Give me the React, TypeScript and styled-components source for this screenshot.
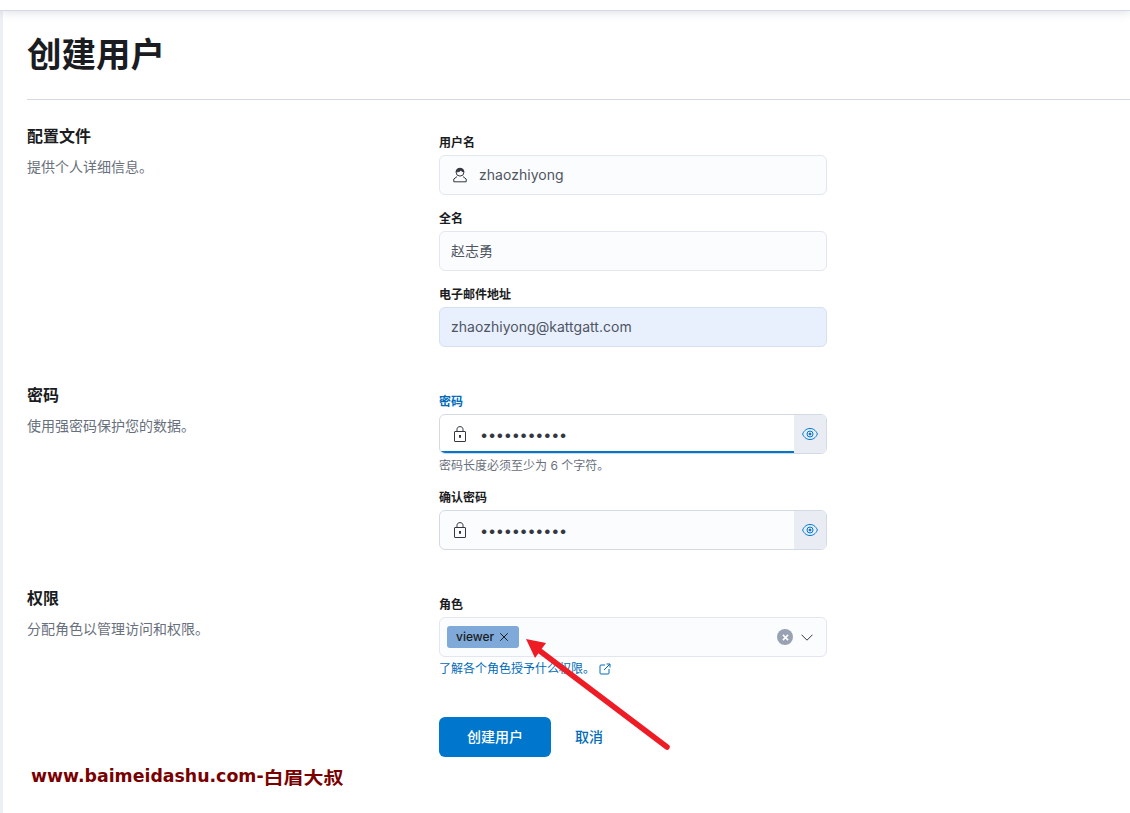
import React from 'react';
import styled, { createGlobalStyle } from 'styled-components';

const cjk = `Inter, "Noto Sans CJK SC", sans-serif`;

const Global = createGlobalStyle`
  html, body { margin: 0; padding: 0; background: #fff; }
  body { font-family: ${cjk}; color: #1a1c21; overflow: hidden; }
  * { box-sizing: border-box; }
`;

const Page = styled.div`
  position: relative;
  width: 1130px;
  height: 813px;
  overflow: hidden;
  background: #fff;
`;
const TopBar = styled.header`
  height: 11px;
  background: #fff;
  border-bottom: 1px solid #d3dae6;
  box-shadow: 0 2px 8px rgba(152, 162, 179, 0.3);
  position: relative;
  z-index: 1;
`;
const Shell = styled.div`
  display: flex;
  height: 802px;
`;
const SideStrip = styled.aside`
  width: 3px;
  background: #eceff4;
  flex: none;
`;
const Main = styled.main`
  flex: 1;
  padding-left: 24px;
`;
const Title = styled.h1`
  margin: 0;
  height: 89px;
  padding-top: 23px;
  font-size: 34.5px;
  line-height: 42px;
  font-weight: 700;
  color: #1a1c21;
  border-bottom: 1px solid #d3dae6;
`;
const Sections = styled.div`
  display: flex;
  flex-direction: column;
  gap: 36px;
  padding-top: 24px;
`;
const Section = styled.section`
  display: grid;
  grid-template-columns: 412px 388px;
`;
const SectionHeading = styled.h2`
  margin: 0;
  font-size: 16px;
  line-height: 24px;
  font-weight: 600;
  color: #1a1c21;
`;
const SectionDesc = styled.p`
  margin: 9px 0 0;
  font-size: 14px;
  line-height: 20px;
  color: #69707d;
`;
const Fields = styled.div`
  display: flex;
  flex-direction: column;
  gap: 16px;
  padding-top: 11px;
`;
const Field = styled.div`
  display: flex;
  flex-direction: column;
`;
const Label = styled.label<{ $active?: boolean }>`
  font-size: 12px;
  line-height: 16px;
  font-weight: 600;
  margin-bottom: 4px;
  color: ${p => (p.$active ? '#006bb8' : '#1a1c21')};
`;
const InputBox = styled.div<{ $variant?: 'auto' | 'focus' }>`
  display: flex;
  align-items: center;
  height: 40px;
  border: 1px solid #e2e6f0;
  border-radius: 6px;
  overflow: hidden;
  background: ${p => (p.$variant === 'auto' ? '#e8f0fe' : p.$variant === 'focus' ? '#fff' : '#fbfcfd')};
  border-color: ${p => (p.$variant === 'auto' ? '#d5e0f3' : '#e2e6f0')};
`;
const StrongBox = styled(InputBox)`
  border-color: #d3dae6;
`;
const IconSlot = styled.span<{ $w?: number }>`
  width: ${p => p.$w ?? 40}px;
  flex: none;
  display: flex;
  align-items: center;
  justify-content: center;
  color: #343741;
`;
const Text = styled.input`
  flex: 1;
  min-width: 0;
  height: 100%;
  border: none;
  outline: none;
  background: transparent;
  padding: 0 0 2px;
  font: 400 14px ${cjk};
  letter-spacing: 0.03px;
  color: #4f5562;
`;
const PlainText = styled(Text)`
  padding-left: 11px;
`;
const PasswordWrap = styled.div<{ $focus?: boolean }>`
  flex: 1;
  align-self: stretch;
  display: flex;
  align-items: center;
  box-shadow: ${p => (p.$focus ? 'inset 0 -2px 0 #0077cc' : 'none')};
`;
const Dots = styled(Text)`
  padding-bottom: 0;
  color: #343741;
  font-size: 14.5px;
  letter-spacing: -0.25px;
`;
const EyeAppend = styled.button`
  width: 32px;
  flex: none;
  align-self: stretch;
  border: none;
  padding: 0;
  background: #e9edf3;
  color: #0077cc;
  display: flex;
  align-items: center;
  justify-content: center;
`;
const Help = styled.div`
  margin-top: 4px;
  font-size: 12px;
  line-height: 16px;
  color: #69707d;
`;
const HelpLink = styled.a`
  margin-top: 4px;
  display: flex;
  align-items: center;
  gap: 4px;
  font-size: 12px;
  line-height: 16px;
  color: #006bb8;
`;
const Tag = styled.span`
  margin-left: 7px;
  width: 72px;
  height: 22px;
  border-radius: 3px;
  background: #7ea9d9;
  color: #1a1c21;
  display: flex;
  align-items: center;
  padding: 0 0 1px 9px;
  gap: 5px;
  font-size: 12px;
  font-weight: 500;
`;
const ComboEnd = styled.div`
  margin-left: auto;
  display: flex;
  align-items: center;
  gap: 8px;
  padding-right: 13px;
  color: #343741;
`;
const ClearDot = styled.span`
  width: 16px;
  height: 16px;
  border-radius: 50%;
  background: #98a2b3;
  color: #fff;
  display: flex;
  align-items: center;
  justify-content: center;
`;
const Actions = styled.div`
  display: flex;
  align-items: center;
  gap: 24px;
  margin-top: 40px;
`;
const Primary = styled.button`
  width: 112px;
  height: 40px;
  border: none;
  border-radius: 6px;
  background: #0077cc;
  color: #fff;
  padding: 0 0 2px;
  font: 500 14px ${cjk};
`;
const Cancel = styled.a`
  color: #006bb8;
  font-size: 14px;
  font-weight: 500;
  margin-bottom: 2px;
`;
const Watermark = styled.div`
  position: absolute;
  left: 31px;
  top: 763px;
  display: flex;
  align-items: center;
  height: 26px;
  color: #7a0000;
  font-family: "DejaVu Sans", sans-serif;
  font-weight: 700;
  font-size: 17.35px;
  white-space: nowrap;
`;
const WatermarkCn = styled.span`
  font-family: "Noto Sans CJK SC", sans-serif;
  font-size: 20px;
  display: inline-block;
  transform: scaleY(0.85);
`;
const ArrowLayer = styled.svg`
  position: absolute;
  left: 0;
  top: 0;
  pointer-events: none;
`;

const UserIcon = () => (
  <svg width="16" height="16" viewBox="0 0 16 16" fill="none" stroke="currentColor" strokeWidth="1">
    <circle cx="8" cy="5.2" r="3.9" />
    <path d="M4.1 4.8C6 5 8 4.4 8.8 3 9.4 4.1 10.4 4.7 11.9 4.8 11.7 2.6 9.9 1.3 8 1.3 6.1 1.3 4.3 2.6 4.1 4.8Z" fill="currentColor" />
    <path d="M5 9.6 1.8 12V14.8H14.2V12L11 9.6" />
  </svg>
);
const LockIcon = () => (
  <svg width="16" height="16" viewBox="0 0 16 16" fill="none" stroke="currentColor" strokeWidth="1">
    <rect x="2.5" y="5.5" width="11" height="10" rx="0.5" />
    <path d="M5 5.5V3.2C5 1.6 6.3 0.6 8 0.6 9.7 0.6 11 1.6 11 3.2V5.5" />
    <path d="M8 9V11.8" strokeWidth="2" />
  </svg>
);
const EyeIcon = () => (
  <svg width="16" height="16" viewBox="0 0 16 16" fill="none" stroke="currentColor" strokeWidth="1">
    <path d="M0.6 8C2.4 4 5 2.5 8 2.5 11 2.5 13.6 4 15.4 8 13.6 12 11 13.5 8 13.5 5 13.5 2.4 12 0.6 8Z" />
    <circle cx="8" cy="8" r="3" />
    <circle cx="8" cy="8" r="1" fill="currentColor" />
  </svg>
);
const CrossIcon = ({ size, weight = 1 }: { size: number; weight?: number }) => (
  <svg width={size} height={size} viewBox="0 0 16 16" fill="none" stroke="currentColor" strokeWidth={(16 / size) * weight}>
    <path d="M2 2 14 14M14 2 2 14" />
  </svg>
);
const ChevronIcon = () => (
  <svg width="12" height="7" viewBox="0 0 12 7" fill="none" stroke="currentColor" strokeWidth="1">
    <path d="M0.5 0.7 6 6.2 11.5 0.7" />
  </svg>
);
const ExternalIcon = () => (
  <svg width="12" height="12" viewBox="0 0 12 12" fill="none" stroke="currentColor" strokeWidth="1">
    <path d="M6 2H2Q1 2 1 3V10Q1 11 2 11H9Q10 11 10 10V6" />
    <path d="M5 7 11 1M7.5 1H11V4.5" />
  </svg>
);

const PasswordField = ({ focus }: { focus?: boolean }) => (
  <StrongBox $variant={focus ? 'focus' : undefined}>
    <PasswordWrap $focus={focus}>
      <IconSlot><LockIcon /></IconSlot>
      <Dots type="password" readOnly value="aaaaaaaaaaa" />
    </PasswordWrap>
    <EyeAppend type="button" aria-label="显示密码"><EyeIcon /></EyeAppend>
  </StrongBox>
);

export default function App() {
  return (
    <Page>
      <Global />
      <TopBar />
      <Shell>
        <SideStrip />
        <Main>
          <Title>创建用户</Title>
          <Sections>
            <Section>
              <div>
                <SectionHeading>配置文件</SectionHeading>
                <SectionDesc>提供个人详细信息。</SectionDesc>
              </div>
              <Fields>
                <Field>
                  <Label>用户名</Label>
                  <InputBox>
                    <IconSlot $w={39}><UserIcon /></IconSlot>
                    <Text readOnly value="zhaozhiyong" />
                  </InputBox>
                </Field>
                <Field>
                  <Label>全名</Label>
                  <InputBox><PlainText readOnly value="赵志勇" /></InputBox>
                </Field>
                <Field>
                  <Label>电子邮件地址</Label>
                  <InputBox $variant="auto"><PlainText readOnly value="zhaozhiyong@kattgatt.com" /></InputBox>
                </Field>
              </Fields>
            </Section>
            <Section>
              <div>
                <SectionHeading>密码</SectionHeading>
                <SectionDesc>使用强密码保护您的数据。</SectionDesc>
              </div>
              <Fields>
                <Field>
                  <Label $active>密码</Label>
                  <PasswordField focus />
                  <Help>密码长度必须至少为 6 个字符。</Help>
                </Field>
                <Field>
                  <Label>确认密码</Label>
                  <PasswordField />
                </Field>
              </Fields>
            </Section>
            <Section>
              <div>
                <SectionHeading>权限</SectionHeading>
                <SectionDesc>分配角色以管理访问和权限。</SectionDesc>
              </div>
              <Fields>
                <Field>
                  <Label>角色</Label>
                  <InputBox>
                    <Tag>viewer<CrossIcon size={10} /></Tag>
                    <ComboEnd>
                      <ClearDot><CrossIcon size={7} weight={1.5} /></ClearDot>
                      <ChevronIcon />
                    </ComboEnd>
                  </InputBox>
                  <HelpLink>了解各个角色授予什么权限。<ExternalIcon /></HelpLink>
                  <Actions>
                    <Primary type="button">创建用户</Primary>
                    <Cancel>取消</Cancel>
                  </Actions>
                </Field>
              </Fields>
            </Section>
          </Sections>
        </Main>
      </Shell>
      <Watermark>www.baimeidashu.com-<WatermarkCn>白眉大叔</WatermarkCn></Watermark>
      <ArrowLayer width="1130" height="813" viewBox="0 0 1130 813">
        <path d="M667 747 536 648" stroke="#ee1c25" strokeWidth="5.5" strokeLinecap="round" fill="none" />
        <path d="M526 639 546 643 535 658Z" fill="#ee1c25" />
      </ArrowLayer>
    </Page>
  );
}
